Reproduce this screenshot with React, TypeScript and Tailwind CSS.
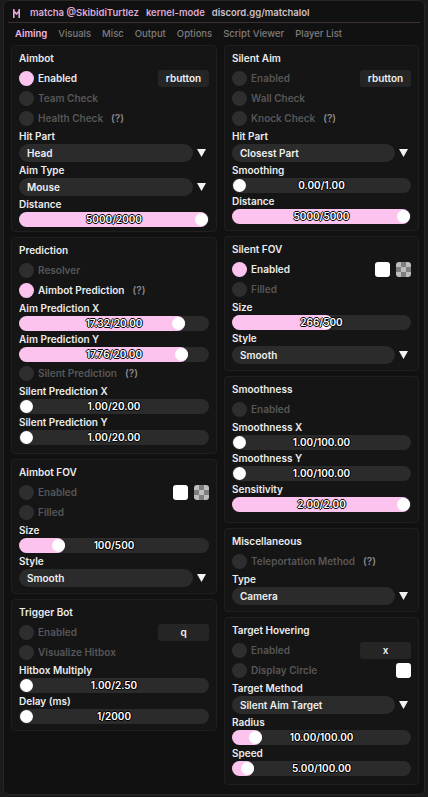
import React from 'react';

type Kid = { children?: React.ReactNode };

function Card({ title, children, pb = 'pb-[6px]' }: { title: string; pb?: string } & Kid) {
  return (
    <div className={`rounded-[4px] border border-[#1f1f1f] bg-[#151515] px-[7px] pt-[5px] ${pb}`}>
      <div className="h-[14px] leading-[14px] text-[10px] font-semibold text-[#ececec]">{title}</div>
      <div className="mt-[3px] flex flex-col">{children}</div>
    </div>
  );
}

function Toggle({ label, on, hint, right }: { label: string; on?: boolean; hint?: boolean; right?: React.ReactNode }) {
  return (
    <div className="flex h-5 items-center">
      <div className={on ? 'h-[15px] w-[15px] rounded-full bg-[#fbc3ee]' : 'h-[15px] w-[15px] rounded-full bg-[#2e2e2e]'} />
      <span className={on ? 'ml-1 text-[10px] font-semibold text-[#ececec]' : 'ml-1 text-[10px] font-semibold text-[#575757]'}>{label}</span>
      {hint && <span className="ml-[8px] text-[10px] font-semibold text-[#8a8a8a]">(?)</span>}
      {right && <div className="ml-auto flex items-center gap-[6px]">{right}</div>}
    </div>
  );
}

function KeyBtn({ k }: { k: string }) {
  return (
    <div className="flex h-[17px] w-[51px] items-center justify-center rounded-[3px] bg-[#252525] text-[10px] font-semibold text-[#f0f0f0]">
      {k}
    </div>
  );
}

const White = () => <div className="h-[15px] w-[15px] rounded-[3px] bg-white" />;

const Checker = () => (
  <div className="grid h-[15px] w-[15px] grid-cols-3 grid-rows-3 overflow-hidden rounded-[3px]">
    {[0, 1, 2, 3, 4, 5, 6, 7, 8].map(i => (
      <div key={i} className={i % 2 === 0 ? 'bg-[#bdbdbd]' : 'bg-[#7e7e7e]'} />
    ))}
  </div>
);

function Label({ text }: { text: string }) {
  return <div className="mt-[2px] h-[12px] leading-[12px] text-[10px] font-semibold text-[#ececec]">{text}</div>;
}

function Slider({ label, value, frac }: { label: string; value: string; frac: number }) {
  const knobLeft = `calc(1px + ${frac} * (100% - 15px))`;
  return (
    <>
      <Label text={label} />
      <div className="relative mt-[2px] h-[15px] rounded-full bg-[#2b2b2b]">
        {frac > 0 && (
          <div className="absolute top-0 bottom-0 left-0 rounded-full bg-[#fbc3ee]" style={{ width: `calc(${knobLeft} + 13px)` }} />
        )}
        <div className="absolute top-[1px] h-[13px] w-[13px] rounded-full bg-white" style={{ left: knobLeft }} />
        <div className="absolute inset-0 flex items-center justify-center text-[10px] font-semibold text-white [text-shadow:-1px_0_#000,1px_0_#000,0_-1px_#000,0_1px_#000]">
          {value}
        </div>
      </div>
    </>
  );
}

function Dropdown({ label, value }: { label: string; value: string }) {
  return (
    <>
      <Label text={label} />
      <div className="mt-[2px] flex items-center">
        <div className="flex h-[18px] flex-1 items-center rounded-full bg-[#2b2b2b] pl-[8px] text-[10px] font-semibold text-[#f0f0f0]">
          {value}
        </div>
        <div className="flex w-4 justify-center">
          <svg width="9" height="8" viewBox="0 0 9 8">
            <polygon points="0,0 9,0 4.5,8" fill="#f2f2f2" />
          </svg>
        </div>
      </div>
    </>
  );
}

export default function App() {
  const tabs = ['Aiming', 'Visuals', 'Misc', 'Output', 'Options', 'Script Viewer', 'Player List'];
  return (
    <div className="h-[797px] w-[428px] overflow-hidden bg-[#1b1b1b] font-['Inter',sans-serif]">
      <div className="mx-[3px] h-[795px] rounded-[6px] border border-[#262626] bg-[#111111]">
        {/* title bar */}
        <div className="mx-[4px] flex h-[22px] items-center border-b border-[#3a3033] pt-[3px] pl-[5px]">
          <svg width="7" height="9" viewBox="0 0 7 9" className="mr-[10px]">
            <path d="M0.8 0 V9 M6.2 0 V9 M0.8 2 L3.5 5 L6.2 2" stroke="#e6a8d9" strokeWidth="1.6" fill="none" />
          </svg>
          <span className="text-[9.5px] font-semibold text-[#dea9d4]">matcha @SkibidiTurtlez</span>
          <span className="ml-[7px] text-[9.5px] font-semibold text-[#dea9d4]">kernel-mode</span>
          <span className="ml-[7px] text-[9.5px] font-semibold text-[#cdc2c9]">discord.gg/matchalol</span>
        </div>
        {/* tabs */}
        <div className="flex h-[22px] items-center gap-[11px] pl-[11px]">
          {tabs.map((t, i) => (
            <span key={t} className={i === 0 ? 'text-[9.5px] font-semibold text-[#f0b6e4]' : 'text-[9.5px] font-medium text-[#7d7d7d]'}>
              {t}
            </span>
          ))}
        </div>
        {/* columns */}
        <div className="flex gap-[7px] pl-[7px]">
          <div className="flex w-[206px] flex-col gap-[5px]">
            <Card title="Aimbot" pb="pb-[4px]">
              <Toggle label="Enabled" on right={<KeyBtn k="rbutton" />} />
              <Toggle label="Team Check" />
              <Toggle label="Health Check" hint />
              <Dropdown label="Hit Part" value="Head" />
              <Dropdown label="Aim Type" value="Mouse" />
              <Slider label="Distance" value="5000/2000" frac={1} />
            </Card>
            <Card title="Prediction" pb="pb-[8px]">
              <Toggle label="Resolver" />
              <Toggle label="Aimbot Prediction" on hint />
              <Slider label="Aim Prediction X" value="17.32/20.00" frac={0.866} />
              <Slider label="Aim Prediction Y" value="17.76/20.00" frac={0.888} />
              <div className="mt-[1px]" />
              <Toggle label="Silent Prediction" hint />
              <Slider label="Silent Prediction X" value="1.00/20.00" frac={0} />
              <Slider label="Silent Prediction Y" value="1.00/20.00" frac={0} />
            </Card>
            <Card title="Aimbot FOV">
              <Toggle label="Enabled" right={<><White /><Checker /></>} />
              <Toggle label="Filled" />
              <Slider label="Size" value="100/500" frac={0.18} />
              <Dropdown label="Style" value="Smooth" />
            </Card>
            <Card title="Trigger Bot">
              <Toggle label="Enabled" right={<KeyBtn k="q" />} />
              <Toggle label="Visualize Hitbox" />
              <Slider label="Hitbox Multiply" value="1.00/2.50" frac={0} />
              <Slider label="Delay (ms)" value="1/2000" frac={0} />
            </Card>
          </div>
          <div className="flex w-[195px] flex-col gap-[5px]">
            <Card title="Silent Aim">
              <Toggle label="Enabled" right={<KeyBtn k="rbutton" />} />
              <Toggle label="Wall Check" />
              <Toggle label="Knock Check" hint />
              <Dropdown label="Hit Part" value="Closest Part" />
              <Slider label="Smoothing" value="0.00/1.00" frac={0} />
              <Slider label="Distance" value="5000/5000" frac={1} />
            </Card>
            <Card title="Silent FOV">
              <Toggle label="Enabled" on right={<><White /><Checker /></>} />
              <Toggle label="Filled" />
              <Slider label="Size" value="266/500" frac={0.532} />
              <Dropdown label="Style" value="Smooth" />
            </Card>
            <Card title="Smoothness" pb="pb-[10px]">
              <Toggle label="Enabled" />
              <Slider label="Smoothness X" value="1.00/100.00" frac={0} />
              <Slider label="Smoothness Y" value="1.00/100.00" frac={0} />
              <Slider label="Sensitivity" value="2.00/2.00" frac={1} />
            </Card>
            <Card title="Miscellaneous">
              <Toggle label="Teleportation Method" hint />
              <Dropdown label="Type" value="Camera" />
            </Card>
            <Card title="Target Hovering" pb="pb-[8px]">
              <Toggle label="Enabled" right={<KeyBtn k="x" />} />
              <Toggle label="Display Circle" right={<White />} />
              <Dropdown label="Target Method" value="Silent Aim Target" />
              <Slider label="Radius" value="10.00/100.00" frac={0.1} />
              <Slider label="Speed" value="5.00/100.00" frac={0.05} />
            </Card>
          </div>
        </div>
      </div>
    </div>
  );
}
